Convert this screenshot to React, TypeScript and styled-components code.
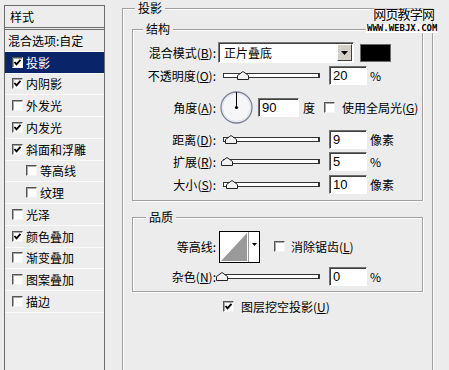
import React from "react";
import styled, { createGlobalStyle } from "styled-components";

const GlobalStyle = createGlobalStyle`
  html, body {
    margin: 0;
    padding: 0;
    background: #ececec;
  }
  body {
    font-family: "Noto Sans CJK SC", "Liberation Sans", sans-serif;
    font-size: 12px;
    color: #000;
  }
`;

const Dialog = styled.div`
  position: relative;
  display: flex;
  align-items: flex-start;
  width: 449px;
  height: 370px;
  overflow: hidden;
`;

/* ---------- left: effects list ---------- */

const StyleList = styled.div`
  margin: 5px 0 0 4px;
  width: 99px;
  height: 420px;
  flex: none;
  border: 1px solid #6b6b6b;
  background: #ededed;
`;

const ListHeader = styled.div`
  height: 21px;
  line-height: 21px;
  padding-left: 5px;
  border-bottom: 3px double #6f6f6f;
`;

const ListRow = styled.div<{ $selected?: boolean; $indent?: boolean; $plain?: boolean }>`
  display: flex;
  align-items: center;
  gap: 3px;
  height: 20.75px;
  padding-left: ${({ $indent, $plain }) => ($plain ? 3 : $indent ? 21 : 7)}px;
  border-bottom: 1px solid #fafafa;
  background: ${({ $selected }) => ($selected ? "#0a246a" : "transparent")};
  color: ${({ $selected }) => ($selected ? "#fff" : "#000")};
  white-space: nowrap;
`;

/* ---------- shared controls ---------- */

const Box = styled.span<{ $gap?: number }>`
  display: inline-flex;
  align-items: center;
  justify-content: center;
  flex: none;
  width: 9px;
  height: 9px;
  margin-left: ${({ $gap }) => $gap ?? 0}px;
  border: 1px solid;
  border-color: #555 #f4f4f4 #f4f4f4 #555;
  box-shadow: inset 1px 1px 0 #a8a8a8;
  background: #fff;
`;

const Check = ({ checked, gap }: { checked: boolean; gap?: number }) => (
  <Box $gap={gap}>
    {checked && (
      <svg width="9" height="9" viewBox="0 0 9 9">
        <polyline
          points="1.5,4 3.5,6.3 7.5,1.8"
          fill="none"
          stroke="#000"
          strokeWidth="1.9"
        />
      </svg>
    )}
  </Box>
);

const Group = styled.fieldset<{ $h: number; $top?: number; $pad: string }>`
  box-sizing: border-box;
  margin: ${({ $top }) => $top ?? 0}px 0 0 0;
  padding: ${({ $pad }) => $pad};
  min-width: 0;
  height: ${({ $h }) => $h}px;
  border: 1px solid #a0a0a0;
  box-shadow: 1px 1px 0 #fff, inset 1px 1px 0 #fff;
`;

const GroupTitle = styled.legend<{ $offset: number }>`
  margin-left: ${({ $offset }) => $offset}px;
  padding: 0 3px;
  line-height: 14px;
  background: #ececec;
`;

const OuterGroup = styled(Group)`
  flex: none;
  width: 311px;
  margin-left: 17px;
`;

const FieldRow = styled.div<{ $h: number; $top?: number }>`
  display: flex;
  align-items: center;
  height: ${({ $h }) => $h}px;
  margin-top: ${({ $top }) => $top ?? 0}px;
  white-space: nowrap;
`;

const FieldLabel = styled.span`
  flex: none;
  width: 83px;
  margin-right: 2px;
  text-align: right;
`;

const Select = styled.div`
  display: flex;
  box-sizing: border-box;
  width: 136px;
  height: 21px;
  border: 1px solid;
  border-color: #7a7a7a #fff #fff #7a7a7a;
  box-shadow: inset 1px 1px 0 #404040;
  background: #fff;
`;

const SelectText = styled.span`
  flex: 1;
  padding-left: 5px;
  line-height: 19px;
`;

const SelectButton = styled.span`
  display: flex;
  align-items: center;
  justify-content: center;
  box-sizing: border-box;
  width: 15px;
  margin: 1px 1px 1px 0;
  border: 1px solid;
  border-color: #fff #404040 #404040 #fff;
  background: #d4d0c8;
`;

const Swatch = styled.span`
  box-sizing: border-box;
  width: 31px;
  height: 18px;
  margin-left: 6px;
  border: 1px solid #6a6a6a;
  background: #000;
`;

const Track = styled.div<{ $w: number; $left: number }>`
  position: relative;
  box-sizing: border-box;
  flex: none;
  width: ${({ $w }) => $w}px;
  height: 5px;
  margin-left: ${({ $left }) => $left}px;
  border: 1px solid #333;
  border-right-width: 2px;
  background: #fff;
`;

const Thumb = styled.svg`
  position: absolute;
  top: -3px;
  margin-left: -6px;
`;

const Slider = ({ at, w = 97, left = 5 }: { at: number; w?: number; left?: number }) => (
  <Track $w={w} $left={left}>
    <Thumb width="12" height="9" viewBox="0 0 12 9" style={{ left: at }}>
      <polygon
        points="0.5,8.5 0.5,4.5 6,0.5 11.5,4.5 11.5,8.5"
        fill="#f2f2f2"
        stroke="#222"
      />
    </Thumb>
  </Track>
);

const NumberBox = styled.span<{ $w?: number; $gap?: number }>`
  box-sizing: border-box;
  flex: none;
  width: ${({ $w }) => $w ?? 38}px;
  height: 19px;
  margin-left: ${({ $gap }) => $gap ?? 9}px;
  padding-left: 3px;
  border: 1px solid;
  border-color: #6e6e6e #fff #fff #6e6e6e;
  box-shadow: inset 1px 1px 0 #404040;
  background: #fff;
  font-family: "Liberation Sans", Arial, sans-serif;
  font-size: 13px;
  line-height: 17px;
`;

const Unit = styled.span<{ $gap?: number }>`
  margin-left: ${({ $gap }) => $gap ?? 3}px;
`;

const OptionText = styled.span<{ $gap: number }>`
  margin-left: ${({ $gap }) => $gap}px;
`;

const Dial = styled.svg`
  flex: none;
  margin-left: 2px;
`;

const ContourPicker = styled.div`
  display: flex;
  box-sizing: border-box;
  width: 41px;
  height: 32px;
  margin-left: 1px;
  border: 1px solid #000;
  background: #fff;
`;

const ContourArrow = styled.span`
  display: flex;
  justify-content: center;
  flex: 1;
  padding-top: 11px;
  border-left: 1px solid #9a9a9a;
`;

const BottomOption = styled.div`
  display: flex;
  align-items: center;
  height: 16px;
  margin-top: 6px;
  padding-left: 91px;
  white-space: nowrap;
`;

const Watermark = styled.div`
  position: absolute;
  left: 366px;
  top: 5px;
  display: flex;
  flex-direction: column;
  align-items: center;
  pointer-events: none;
`;

const WatermarkTitle = styled.span`
  font-size: 13px;
  line-height: 17px;
  letter-spacing: -0.8px;
  padding-left: 3px;
  text-shadow: 0 0 2px #fff, 0 0 2px #fff, 0 0 3px #fff;
`;

const WatermarkUrl = styled.span`
  margin-top: 2px;
  padding: 0 1px;
  background: #fff;
  font-family: "DejaVu Sans Mono", monospace;
  font-weight: bold;
  font-size: 9px;
  line-height: 9px;
`;

const DownArrow = ({ w = 7 }: { w?: number }) => (
  <svg width={w} height={Math.ceil(w / 2)} viewBox={`0 0 ${w} ${Math.ceil(w / 2)}`}>
    <polygon points={`0,0 ${w},0 ${w / 2},${Math.ceil(w / 2)}`} fill="#000" />
  </svg>
);

const EFFECTS = [
  { label: "投影", checked: true, selected: true },
  { label: "内阴影", checked: true },
  { label: "外发光", checked: false },
  { label: "内发光", checked: true },
  { label: "斜面和浮雕", checked: true },
  { label: "等高线", checked: false, sub: true },
  { label: "纹理", checked: false, sub: true },
  { label: "光泽", checked: false },
  { label: "颜色叠加", checked: true },
  { label: "渐变叠加", checked: false },
  { label: "图案叠加", checked: false },
  { label: "描边", checked: false },
];

const SIZE_ROWS = [
  { name: "距离", key: "D", at: 7, value: "9", unit: "像素", h: 22 },
  { name: "扩展", key: "R", at: 3, value: "5", unit: "%", h: 23 },
  { name: "大小", key: "S", at: 8, value: "10", unit: "像素", h: 22 },
];

export default function App() {
  return (
    <>
      <GlobalStyle />
      <Dialog>
        <StyleList>
          <ListHeader>样式</ListHeader>
          <ListRow $plain>混合选项:自定</ListRow>
          {EFFECTS.map((fx) => (
            <ListRow key={fx.label} $selected={fx.selected} $indent={fx.sub}>
              <Check checked={fx.checked} />
              {fx.label}
            </ListRow>
          ))}
        </StyleList>

        <OuterGroup $h={420} $top={1} $pad="7px 9px 0">
          <GroupTitle $offset={3}>投影</GroupTitle>

          <Group $h={179} $pad="5px 0 0">
            <GroupTitle $offset={10}>结构</GroupTitle>
            <FieldRow $h={23}>
              <FieldLabel>
                混合模式(<u>B</u>):
              </FieldLabel>
              <Select>
                <SelectText>正片叠底</SelectText>
                <SelectButton>
                  <DownArrow />
                </SelectButton>
              </Select>
              <Swatch />
            </FieldRow>
            <FieldRow $h={22}>
              <FieldLabel>
                不透明度(<u>O</u>):
              </FieldLabel>
              <Slider at={19} />
              <NumberBox>20</NumberBox>
              <Unit>%</Unit>
            </FieldRow>
            <FieldRow $h={42}>
              <FieldLabel>
                角度(<u>A</u>):
              </FieldLabel>
              <Dial width="33" height="33" viewBox="0 0 33 33">
                <circle cx="16.5" cy="16.5" r="15.5" fill="#f6f6f8" stroke="#7c8196" strokeWidth="1.3" />
                <circle cx="16.5" cy="16.5" r="14" fill="none" stroke="#dfe1e8" />
                <line x1="16.5" y1="16.5" x2="16.5" y2="1" stroke="#000" />
                <circle cx="16.5" cy="16.5" r="1.6" fill="#000" />
              </Dial>
              <NumberBox $w={41} $gap={5}>90</NumberBox>
              <Unit $gap={4}>度</Unit>
              <Check checked={false} gap={9} />
              <OptionText $gap={7}>
                使用全局光(<u>G</u>)
              </OptionText>
            </FieldRow>
            {SIZE_ROWS.map((row) => (
              <FieldRow key={row.key} $h={row.h}>
                <FieldLabel>
                  {row.name}(<u>{row.key}</u>):
                </FieldLabel>
                <Slider at={row.at} />
                <NumberBox>{row.value}</NumberBox>
                <Unit>{row.unit}</Unit>
              </FieldRow>
            ))}
          </Group>

          <Group $h={82} $top={9} $pad="6px 0 0">
            <GroupTitle $offset={13}>品质</GroupTitle>
            <FieldRow $h={33}>
              <FieldLabel>等高线:</FieldLabel>
              <ContourPicker>
                <svg width="28" height="30" viewBox="0 0 28 30">
                  <polygon points="1,29 27,1 27,29" fill="#9a9a9a" />
                </svg>
                <ContourArrow>
                  <DownArrow w={5} />
                </ContourArrow>
              </ContourPicker>
              <Check checked={false} gap={14} />
              <OptionText $gap={6}>
                消除锯齿(<u>L</u>)
              </OptionText>
            </FieldRow>
            <FieldRow $h={22} $top={2}>
              <FieldLabel>
                杂色(<u>N</u>):
              </FieldLabel>
              <Slider at={2} w={101} left={1} />
              <NumberBox>0</NumberBox>
              <Unit>%</Unit>
            </FieldRow>
          </Group>

          <BottomOption>
            <Check checked />
            <OptionText $gap={7}>
              图层挖空投影(<u>U</u>)
            </OptionText>
          </BottomOption>
        </OuterGroup>

        <Watermark>
          <WatermarkTitle>网页教学网</WatermarkTitle>
          <WatermarkUrl>WWW.WEBJX.COM</WatermarkUrl>
        </Watermark>
      </Dialog>
    </>
  );
}
